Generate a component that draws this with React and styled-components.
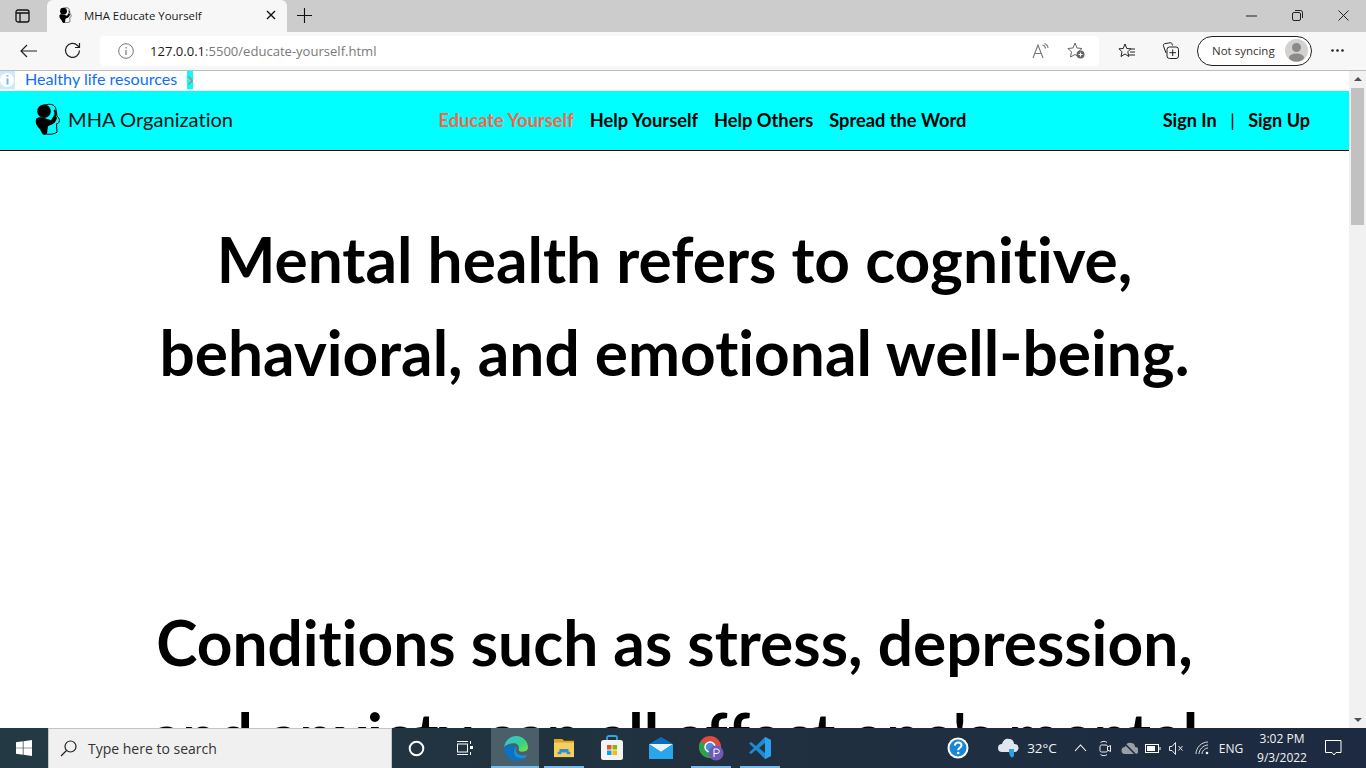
import React from "react";
import styled, { createGlobalStyle } from "styled-components";

const Global = createGlobalStyle`
  html, body { margin: 0; padding: 0; height: 100%; overflow: hidden; background: #fff; }
  #root { height: 100%; }
  * { box-sizing: border-box; }
`;

const Screen = styled.div`
  width: 1366px; height: 768px; display: flex; flex-direction: column; overflow: hidden;
  font-family: "Open Sans", "Noto Sans", sans-serif;
`;
const TabStrip = styled.div`
  height: 32px; flex: none; background: #cccccc; display: flex; align-items: flex-end;
`;
const TabToggle = styled.div`
  width: 47px; height: 32px; flex: none; display: flex; align-items: center; justify-content: center; padding: 0 2px 1px 0;
`;
const Tab = styled.div`
  width: 240px; height: 32px; flex: none; background: #f7f7f7; border-radius: 6px 6px 0 0;
  display: flex; align-items: center; padding: 0 11px 2px 12px; gap: 11px;
  font-size: 11.4px; color: #1a1a1a;
`;
const TabTitle = styled.span`flex: 1; white-space: nowrap; margin-left: 1px;`;
const NewTab = styled.div`
  width: 36px; height: 32px; flex: none; display: flex; align-items: center; justify-content: center; padding: 0 1px 2px 0;
`;
const Spacer = styled.div`flex: ${p => (p.$w ? `0 0 ${p.$w}px` : "1")};`;
const WinButtons = styled.div`display: flex; height: 32px; align-items: center; padding-right: 0;`;
const WinButton = styled.div`
  width: 46px; height: 32px; display: flex; align-items: center; justify-content: center; padding-bottom: 1px;
`;
const Toolbar = styled.div`
  height: 39px; flex: none; background: #f7f7f7; border-bottom: 1px solid #bdbdbd;
  display: flex; align-items: center; padding: 0 0 1px 0;
`;
const NavIcon = styled.div`
  width: ${p => p.$w || 44}px; height: 30px; flex: none; display: flex; align-items: center; justify-content: center;
`;
const AddressBar = styled.div`
  width: 999px; height: 30px; flex: none; margin-left: 6px; background: #fff; border-radius: 4px;
  display: flex; align-items: center; padding: 0 0 0 18px;
`;
const Url = styled.div`
  margin-left: 16px; font-size: 13.05px; color: #7a7a7a; white-space: nowrap;
  b { font-weight: 400; color: #1a1a1a; }
`;
const SyncPill = styled.div`
  width: 115px; height: 30px; flex: none; border: 1px solid #222; border-radius: 15px; background: #fff;
  display: flex; align-items: center; justify-content: space-between; padding: 0 3px 0 14px;
  font-size: 11.5px; color: #333; white-space: nowrap;
`;
const Viewport = styled.div`
  flex: 1; min-height: 0; display: flex; overflow: hidden; background: #fff;
`;
const Page = styled.div`
  flex: 1; min-width: 0; font-family: Lato, sans-serif; overflow: hidden;
  font-variant-ligatures: none;
`;
const Breadcrumb = styled.div`
  height: 20px; display: flex; align-items: flex-start; font-size: 16.1px; line-height: 16px;
`;
const BreadLink = styled.span`color: #0d6efd; margin-left: 10px;`;
const Chevron = styled.span`
  margin-left: 10px; width: 6px; height: 18px; background: #00ffff;
  display: flex; align-items: center; justify-content: center;
`;
const Header = styled.header`
  height: 60px; background: #00ffff; border-bottom: 1px solid #000;
  display: grid; grid-template-columns: 1fr auto 1fr; align-items: center; padding: 0 39px 2px 35px;
`;
const Brand = styled.div`
  display: flex; align-items: center; gap: 7px; font-size: 20.1px; color: #111; white-space: nowrap;
  span { margin-bottom: 2px; }
`;
const Nav = styled.nav`
  display: flex; gap: 16px; white-space: nowrap; margin-left: 60px;
`;
const NavLink = styled.a`
  color: ${p => (p.$active ? "#ff6347" : "#000")}; font-weight: 700; font-size: 18.25px;
`;
const Auth = styled.div`
  display: flex; justify-content: flex-end; gap: 13.5px; font-size: 18.05px; font-weight: 700; color: #000; white-space: nowrap;
`;
const Divider = styled.span`font-weight: 400;`;
const Content = styled.main`padding-top: 62px;`;
const Statement = styled.h1`
  margin: 0 0 197px; font-size: 62.2px; line-height: 93px; font-weight: 700; color: #000; text-align: center;
  padding: 0 140px;
`;
const ScrollBar = styled.div`
  width: 17px; flex: none; background: #f1f1f1; display: flex; flex-direction: column; align-items: center;
  position: relative;
`;
const ScrollThumb = styled.div`
  width: 13px; height: 137px; margin-top: 17px; background: #c1c1c1;
`;
const ArrowUp = styled.div`
  position: absolute; top: 6px; width: 0; height: 0;
  border-left: 4px solid transparent; border-right: 4px solid transparent; border-bottom: 4px solid #505050;
`;
const ArrowDown = styled.div`
  position: absolute; bottom: 6px; width: 0; height: 0;
  border-left: 4px solid transparent; border-right: 4px solid transparent; border-top: 4px solid #505050;
`;
const Taskbar = styled.div`
  height: 40px; flex: none; background: linear-gradient(90deg, #233a45 0%, #21323f 40%, #1d2a42 100%);
  display: flex; align-items: stretch; color: #fff;
`;
const StartButton = styled.div`
  width: 48px; flex: none; display: flex; align-items: center; justify-content: center;
`;
const SearchBox = styled.div`
  width: 344px; flex: none; background: #f0f0f0; border: 1px solid #bfc5c8; border-bottom: none;
  display: flex; align-items: center; padding-left: 11px; gap: 11px; font-size: 14px; color: #333;
`;
const TaskIcon = styled.div`
  width: ${p => p.$w || 48}px; flex: none; display: flex; align-items: center; justify-content: center;
  background: ${p => (p.$focus ? "#4a5f68" : "transparent")};
  box-shadow: ${p => (p.$open ? "inset 0 -2px 0 #76b9ed" : "none")};
  margin: ${p => p.$m || 0};
`;
const Tray = styled.div`
  flex: 1; display: flex; align-items: center; font-size: 12px; color: #f2f2f2;
  padding-left: ${p => p.$pad || 0}px;
`;
const TraySlot = styled.div`
  width: ${p => p.$w}px; flex: none; height: 40px; display: flex; align-items: center; justify-content: center;
  white-space: nowrap; font-size: ${p => p.$fs || 12}px; margin-left: ${p => p.$ml || 0}px;
`;
const Clock = styled.div`
  width: ${p => p.$w}px; flex: none; text-align: center; font-size: 12px; line-height: 19px; margin-left: ${p => p.$ml || 0}px;
`;

const Logo = ({ size = 26 }) => (
  <svg width={size} height={size * 1.25} viewBox="0 0 26 32">
    <path d="M9 2c6-2 11-1 12 4l1 7c2 1 3 4 2 6-.5 1-1.500 1.500-2.500 1.500L22 29c-4 2.500-9 2.500-13 1" fill="none" stroke="#000" strokeWidth="1" />
    <circle cx="9" cy="8" r="6.800" fill="#000" />
    <path d="M5 14l5 1 6 2 3-5 3 2c-.5 4-3 7-7 8l-2 1-1 7c-1 2-4 2-5 0L5 26c-3-3-5-6-4-10 0-1 2-2 4-2z" fill="#000" />
    <path d="M19 7c1.500 1 2 3 1 6" fill="none" stroke="#000" strokeWidth="2" />
  </svg>
);

const Edge = () => (
  <svg width="25" height="25" viewBox="0 0 24 24">
    <defs>
      <linearGradient id="eg" x1="0" y1="0" x2="1" y2="1"><stop offset="0" stopColor="#35c1f1" /><stop offset="0.6" stopColor="#36d27f" /><stop offset="1" stopColor="#7fe04c" /></linearGradient>
    </defs>
    <path d="M1 11C2 4 7 0 13 0c6 0 11 5 11 11 0 3-3 4-6 4-2 0-3-1-3-2 1-3-1-6-5-6-4 0-8 2-9 4z" fill="url(#eg)" />
    <path d="M1 11c0 7 5 13 12 13 3 0 6-1 8-3-4 1-9 0-10-3-2-3-1-7 2-8-4-2-10-2-12 1z" fill="#0c72c4" />
    <path d="M11 18c1 3 6 4 10 3 1-1 2-2 2-3-2 1-5 1-7 0-3-1-4-3-3-8-2 1-3 4-2 8z" fill="#1590e0" />
  </svg>
);
const Folder = () => (
  <svg width="22" height="20" viewBox="0 0 24 22">
    <path d="M1 1h9l2 2h11v3H1z" fill="#e0a526" />
    <path d="M1 5h22v16H1z" fill="#f7cf5b" />
    <path d="M7 12h10v3h2v3h-4v-2H9v2H5v-3h2z" fill="#2d8fd5" />
  </svg>
);
const Store = () => (
  <svg width="24" height="26" viewBox="0 0 24 26">
    <path d="M7 7V3c0-1.500 1-2 2-2h6c1 0 2 .5 2 2v4" fill="none" stroke="#2fa8e0" strokeWidth="1.800" />
    <rect x="1" y="5" width="22" height="20" rx="2.500" fill="#f4f4f4" />
    <rect x="7" y="10" width="4.500" height="4.500" fill="#f25022" />
    <rect x="12.500" y="10" width="4.500" height="4.500" fill="#7fba00" />
    <rect x="7" y="15.500" width="4.500" height="4.500" fill="#00a4ef" />
    <rect x="12.500" y="15.500" width="4.500" height="4.500" fill="#ffb900" />
  </svg>
);
const Mail = () => (
  <svg width="24" height="22" viewBox="0 0 24 22">
    <path d="M0 7L12 0l12 7v15H0z" fill="#0f6cbd" />
    <path d="M0 7h24L12 15z" fill="#e8f4fc" />
    <path d="M0 7l12 8 12-8v15H0z" fill="#28a8ea" />
  </svg>
);
const Chrome = () => (
  <svg width="26" height="26" viewBox="0 0 26 26">
    <circle cx="12" cy="12" r="11" fill="#dd4b3e" />
    <path d="M12 12L2.500 6.500A11 11 0 0 0 12 23z" fill="#2ba14b" />
    <path d="M12 12h11A11 11 0 0 1 12 23z" fill="#fbc02d" />
    <circle cx="12" cy="12" r="5" fill="#4a90e2" stroke="#fff" strokeWidth="1.500" />
    <circle cx="18" cy="18" r="7.500" fill="#6d5bb5" />
    <path d="M16 22v-8h3a2.200 2.200 0 0 1 0 4.500h-3" fill="none" stroke="#fff" strokeWidth="1" />
  </svg>
);
const VSCode = () => (
  <svg width="24" height="24" viewBox="0 0 24 24">
    <path d="M17 1l6 3v16l-6 3L8 14l-5 4-2-1.500L6 12 1 7.500 3 6l5 4z" fill="#1f8ad2" />
    <path d="M17 1l6 3v16l-6 3z" fill="#2aa3ec" />
    <path d="M17 7l-6 5 6 5z" fill="#233540" />
  </svg>
);

export default function App() {
  return (
    <Screen>
      <Global />
      <TabStrip>
        <TabToggle>
          <svg width="15" height="14" viewBox="0 0 15 14" fill="none" stroke="#111" strokeWidth="1.300"><rect x="1" y="1" width="13" height="12" rx="2" /><path d="M1 4h13M5 4v9" /></svg>
        </TabToggle>
        <Tab>
          <Logo size={13} />
          <TabTitle>MHA Educate Yourself</TabTitle>
          <svg width="10" height="10" viewBox="0 0 10 10" stroke="#111" strokeWidth="1.400"><path d="M1 1l8 8M9 1l-8 8" /></svg>
        </Tab>
        <NewTab>
          <svg width="15" height="15" viewBox="0 0 15 15" stroke="#111" strokeWidth="1.100"><path d="M7.500 0v15M0 7.500h15" /></svg>
        </NewTab>
        <Spacer />
        <WinButtons>
          <WinButton><svg width="11" height="2" viewBox="0 0 11 2" stroke="#222"><path d="M0 1h11" /></svg></WinButton>
          <WinButton><svg width="11" height="11" viewBox="0 0 11 11" fill="none" stroke="#222"><rect x=".5" y="2.500" width="8" height="8" rx="1.500" /><path d="M3 .5h5.500a2 2 0 0 1 2 2V8" /></svg></WinButton>
          <WinButton><svg width="11" height="11" viewBox="0 0 11 11" stroke="#222"><path d="M.5.5l10 10M10.500.5l-10 10" /></svg></WinButton>
        </WinButtons>
      </TabStrip>
      <Toolbar>
        <NavIcon $w={56}>
          <svg width="17" height="14" viewBox="0 0 17 14" fill="none" stroke="#222" strokeWidth="1.200"><path d="M17 7H1M7 1L1 7l6 6" /></svg>
        </NavIcon>
        <NavIcon $w={32}>
          <svg width="17" height="17" viewBox="0 0 17 17" fill="none" stroke="#222" strokeWidth="1.200"><path d="M15.500 8.500a7 7 0 1 1-2-5l2 2M15.500 1v4.500H11" /></svg>
        </NavIcon>
        <Spacer $w={6} />
        <AddressBar>
          <svg width="16" height="16" viewBox="0 0 16 16" fill="none" stroke="#777"><circle cx="8" cy="8" r="7.300" /><path d="M8 7v5M8 4v1.500" strokeWidth="1.200" /></svg>
          <Url><b>127.0.0.1</b>:5500/educate-yourself.html</Url>
          <Spacer />
          <NavIcon $w={22}>
            <svg width="17" height="16" viewBox="0 0 17 16" fill="none" stroke="#777" strokeWidth="1.100"><path d="M1 15L6 2l5 13M2.800 10.500h6.500M10.500 2c2 .5 3 2 3 3.500M12.500 .5c2 .8 3.500 2.500 3.500 4.500" /></svg>
          </NavIcon>
          <Spacer $w={2} />
          <NavIcon $w={46}>
            <svg width="18" height="17" viewBox="0 0 18 17" fill="none"><path d="M8 1l2 5 5 .5-4 3.500 1 5-4-2.500-4.500 2.500 1-5L1 6.500 6 6z" stroke="#666" /><circle cx="13.500" cy="12.500" r="4" fill="#666" /><path d="M13.500 10.500v4M11.500 12.500h4" stroke="#fff" /></svg>
          </NavIcon>
        </AddressBar>
        <NavIcon $w={54}>
          <svg width="17" height="16" viewBox="0 0 17 16" fill="none" stroke="#222"><path d="M7 1l1.800 4.500 4 .3-3 3 1 4.700L7 11l-4 2.500 1-4.700L1 5.800l4.200-.3z" /><path d="M12 6h5M12 9h5M11 12h6" /></svg>
        </NavIcon>
        <NavIcon $w={36}>
          <svg width="18" height="17" viewBox="0 0 18 17" fill="none" stroke="#222"><path d="M4 11L1.500 4c-.3-1 0-2 1-2.300L8 .8c1-.2 1.800.2 2 1l.5 1.700" /><rect x="5" y="5" width="11.500" height="11.500" rx="2.500" /><path d="M10.700 7.500v6.500M7.500 10.700H14" /></svg>
        </NavIcon>
        <Spacer $w={8} />
        <SyncPill>
          Not syncing
          <svg width="23" height="23" viewBox="0 0 23 23"><circle cx="11.500" cy="11.500" r="11.500" fill="#d3d1cf" /><circle cx="11.500" cy="8.500" r="4.500" fill="#8c8a88" /><ellipse cx="11.500" cy="18.500" rx="7.500" ry="4" fill="#8c8a88" /></svg>
        </SyncPill>
        <NavIcon $w={50}>
          <svg width="13" height="3" viewBox="0 0 13 3" fill="#222"><circle cx="1.500" cy="1.500" r="1.300" /><circle cx="6.500" cy="1.500" r="1.300" /><circle cx="11.500" cy="1.500" r="1.300" /></svg>
        </NavIcon>
      </Toolbar>
      <Viewport>
        <Page>
          <Breadcrumb>
            <svg width="15" height="18" viewBox="0 0 15 18"><rect width="15" height="18" fill="#cfe9fb" /><circle cx="7" cy="9" r="7" fill="#fff" /><path d="M7.500 4v1.500M7.500 7.500v6" stroke="#6cb8ef" strokeWidth="2" /></svg>
            <BreadLink>Healthy life resources</BreadLink>
            <Chevron>
              <svg width="5" height="9" viewBox="0 0 5 9" fill="none" stroke="#ff6347" strokeWidth="1.200"><path d="M.5.5l4 4-4 4" /></svg>
            </Chevron>
          </Breadcrumb>
          <Header>
            <Brand><Logo size={26} /><span>MHA Organization</span></Brand>
            <Nav>
              <NavLink $active>Educate Yourself</NavLink>
              <NavLink>Help Yourself</NavLink>
              <NavLink>Help Others</NavLink>
              <NavLink>Spread the Word</NavLink>
            </Nav>
            <Auth><span>Sign In</span><Divider>|</Divider><span>Sign Up</span></Auth>
          </Header>
          <Content>
            <Statement>Mental health refers to cognitive, behavioral, and emotional well-being.</Statement>
            <Statement>Conditions such as stress, depression, and anxiety can all affect one's mental health.</Statement>
          </Content>
        </Page>
        <ScrollBar>
          <ArrowUp />
          <ScrollThumb />
          <ArrowDown />
        </ScrollBar>
      </Viewport>
      <Taskbar>
        <StartButton>
          <svg width="16" height="16" viewBox="0 0 16 16" fill="#fff"><path d="M0 2.300l6.800-1v6.400H0zM7.500 1.200L16 0v7.700H7.500zM0 8.300h6.800v6.400l-6.800-1zM7.500 8.300H16V16l-8.500-1.200z" /></svg>
        </StartButton>
        <SearchBox>
          <svg width="17" height="17" viewBox="0 0 17 17" fill="none" stroke="#222" strokeWidth="1.200"><circle cx="10.500" cy="6.500" r="5.500" /><path d="M6.500 10.500L1 16" /></svg>
          Type here to search
        </SearchBox>
        <TaskIcon $w={48}>
          <svg width="17" height="17" viewBox="0 0 17 17" fill="none" stroke="#fff" strokeWidth="2"><circle cx="8.500" cy="8.500" r="6.800" /></svg>
        </TaskIcon>
        <TaskIcon $w={51}>
          <svg width="17" height="16" viewBox="0 0 17 16" fill="none" stroke="#fff" style={{ marginRight: 3 }}><rect x="1.500" y="4" width="10" height="8" /><path d="M1 1.500h11M1 14.500h11M14.500 1v3M14.500 12v3" /><rect x="14" y="6" width="3" height="3" fill="#fff" stroke="none" /></svg>
        </TaskIcon>
        <TaskIcon $w={48} $focus $open><Edge /></TaskIcon>
        <TaskIcon $w={40} $open $m="0 4px 0 5px"><Folder /></TaskIcon>
        <TaskIcon $w={48}><Store /></TaskIcon>
        <TaskIcon $w={48} $m="0 0 0 1px"><Mail /></TaskIcon>
        <TaskIcon $w={40} $open $m="0 0 0 6px"><Chrome /></TaskIcon>
        <TaskIcon $w={40} $open $m="0 0 0 9px"><VSCode /></TaskIcon>
        <Tray $pad={167}>
          <TraySlot $w={22}>
            <svg width="24" height="24" viewBox="0 0 22 22"><circle cx="11" cy="11" r="10.500" fill="#fff" /><circle cx="11" cy="11" r="8.500" fill="#1787d8" /><path d="M7.800 8.500c.3-2 1.500-3 3.400-3 2 0 3.300 1.100 3.300 2.800 0 2.500-3.300 2.500-3.300 5" fill="none" stroke="#fff" strokeWidth="2" /><circle cx="11.200" cy="16" r="1.300" fill="#fff" /></svg>
          </TraySlot>
          <TraySlot $w={26} $ml={26}>
            <svg width="24" height="22" viewBox="0 0 24 22"><path d="M6 15a4 4 0 0 1 0-8c1-4 4-6 7-5 3 0 5 2 5 5a4 4 0 0 1 1 8z" fill="#dfe6ee" /><path d="M13 12h5v6c0 2-2 3-3 2-2-2-2-5-2-8z" fill="#2aa3e5" /></svg>
          </TraySlot>
          <TraySlot $w={30} $fs={13.5} $ml={6}>32°C</TraySlot>
          <TraySlot $w={13} $ml={17}>
            <svg width="13" height="8" viewBox="0 0 13 8" fill="none" stroke="#fff" strokeWidth="1.100"><path d="M1 7l5.500-6L12 7" /></svg>
          </TraySlot>
          <TraySlot $w={12} $ml={12}>
            <svg width="12" height="17" viewBox="0 0 12 17" fill="none" stroke="#e8e8e8"><path d="M1.500 2.500C3 1 7 1 8 2.500M1.500 14.500C3 16 7 16 8 14.500" /><rect x="1" y="5" width="7.500" height="7" rx="1.500" /><path d="M8.500 7l3-1.500v6l-3-1.500" /></svg>
          </TraySlot>
          <TraySlot $w={17} $ml={10}>
            <svg width="17" height="13" viewBox="0 0 17 13"><path d="M4 12a3.500 3.500 0 0 1 0-7c1-3 3-5 6-4 3 0 4 2 4 4a3.500 3.500 0 0 1 0 7z" fill="#9a9fa5" /><path d="M2 0l13 13" stroke="#1d2a42" strokeWidth="1.500" /></svg>
          </TraySlot>
          <TraySlot $w={16} $ml={7}>
            <svg width="16" height="9" viewBox="0 0 16 9" fill="none" stroke="#fff"><rect x=".5" y=".5" width="13" height="8" /><rect x="2" y="2" width="8" height="5" fill="#fff" stroke="none" /><path d="M15 3v3" /></svg>
          </TraySlot>
          <TraySlot $w={15} $ml={8}>
            <svg width="15" height="13" viewBox="0 0 15 13" fill="none" stroke="#e8e8e8"><path d="M.5 4.500h2.500L6.500.5v12L3 8.500H.5zM9.500 4l4 4.500M13.500 4l-4 4.500" /></svg>
          </TraySlot>
          <TraySlot $w={14} $ml={11}>
            <svg width="14" height="14" viewBox="0 0 14 14" fill="none" stroke="#dcdcdc"><path d="M1 13C1 7 6 1 13 1M4 13c0-4 4-9 9-9M7 13c0-3 3-6 6-6" /><circle cx="12" cy="12" r="1.300" fill="#fff" stroke="none" /></svg>
          </TraySlot>
          <TraySlot $w={26} $ml={9}>ENG</TraySlot>
          <Clock $w={60} $ml={8}>3:02 PM<br />9/3/2022</Clock>
          <TraySlot $w={17} $ml={13}>
            <svg width="17" height="16" viewBox="0 0 17 16" fill="none" stroke="#fff"><path d="M.5.5h15.500v12H11l-2 2.500-2-2.500H.5z" /></svg>
          </TraySlot>
        </Tray>
      </Taskbar>
    </Screen>
  );
}
